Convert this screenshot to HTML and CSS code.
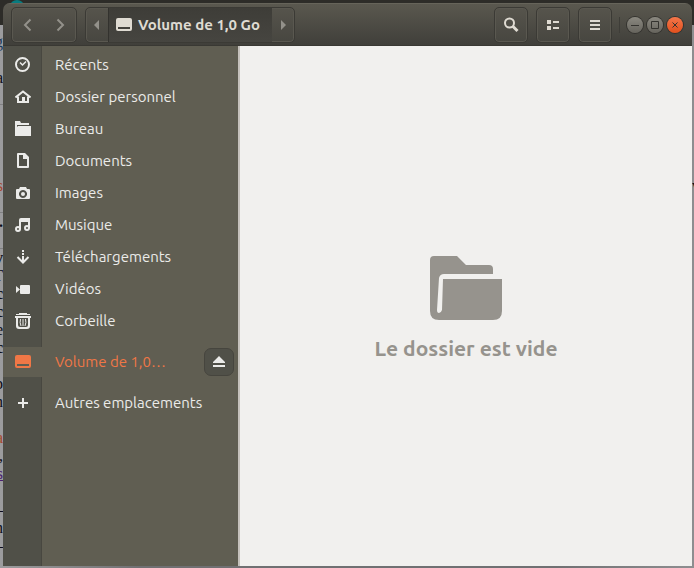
FILE: index.html
```html
<!DOCTYPE html>
<html lang="fr">
<head>
<meta charset="utf-8">
<title>Volume de 1,0 Go</title>
<link rel="stylesheet" href="styles.css">
</head>
<body>
<div class="desktop">
  <div class="backdrop" aria-hidden="true">
    <div class="backdrop-bar"><span class="backdrop-badge"></span></div>
    <div class="backdrop-page">
      <span class="scrap link">g</span>
      <span class="scrap"></span>
      <span class="scrap">a</span>
      <span class="scrap rule"></span>
      <span class="scrap"></span>
      <span class="scrap"></span>
      <span class="scrap"></span>
      <span class="scrap"></span>
      <span class="scrap-row"><span class="scrap warm">s</span><span class="scrap end">v</span></span>
      <span class="scrap rule"></span>
      <span class="scrap heavy">.</span>
      <span class="scrap rule"></span>
      <span class="scrap heavy">v</span>
      <span class="scrap">T</span>
      <span class="scrap heavy">c</span>
      <span class="scrap heavy">c</span>
      <span class="scrap">e</span>
      <span class="scrap heavy">c</span>
      <span class="scrap"></span>
      <span class="scrap">p</span>
      <span class="scrap">n</span>
      <span class="scrap"></span>
      <span class="scrap warm">a</span>
      <span class="scrap">,</span>
      <span class="scrap visited">s</span>
      <span class="scrap"></span>
      <span class="scrap">–</span>
      <span class="scrap">n</span>
      <span class="scrap">–</span>
    </div>
  </div>
  <div class="window">
    <header class="titlebar">
      <div class="group nav">
        <button aria-label="Précédent"><svg width="16" height="16" viewBox="0 0 16 16"><path d="M10.500 2.500 5 8l5.500 5.500" class="stroke"/></svg></button>
        <button aria-label="Suivant"><svg width="16" height="16" viewBox="0 0 16 16"><path d="M5.500 2.500 11 8l-5.500 5.500" class="stroke"/></svg></button>
      </div>
      <div class="group path">
        <button class="arrow" aria-label="Défiler à gauche"><svg width="6" height="10" viewBox="0 0 6 10"><path d="M5 0v10L0 5z"/></svg></button>
        <button class="current"><svg width="16" height="16" viewBox="0 0 16 16"><path fill-rule="evenodd" d="M2 1h12q2 0 2 2v9q0 2-2 2H2q-2 0-2-2V3q0-2 2-2zm0 9v2h12v-2z"/></svg><span>Volume de 1,0 Go</span></button>
        <button class="arrow" aria-label="Défiler à droite"><svg width="6" height="10" viewBox="0 0 6 10"><path d="M1 0v10l5-5z"/></svg></button>
      </div>
      <div class="actions">
        <button class="tool" aria-label="Rechercher"><svg width="16" height="16" viewBox="0 0 16 16"><circle cx="6.500" cy="6" r="4.500" class="stroke"/><path d="m9.500 9 5 5" class="stroke thick"/></svg></button>
        <button class="tool" aria-label="Affichage"><svg width="16" height="16" viewBox="0 0 16 16"><path d="M2 3h4v4H2zM8 4h6v2H8zM2 9h4v4H2zM8 10h6v2H8z"/></svg></button>
        <button class="tool" aria-label="Menu"><svg width="16" height="16" viewBox="0 0 16 16"><path d="M3 3h10v2H3zM3 7h10v2H3zM3 11h10v2H3z"/></svg></button>
      </div>
      <div class="controls">
        <button aria-label="Réduire"><svg width="16" height="16" viewBox="0 0 16 16"><path d="M4 8.500h8"/></svg></button>
        <button aria-label="Agrandir"><svg width="16" height="16" viewBox="0 0 16 16"><path d="M4.500 4.500h7v7h-7z"/></svg></button>
        <button class="close" aria-label="Fermer"><svg width="16" height="16" viewBox="0 0 16 16"><path d="m5.500 5.500 5 5m0-5-5 5"/></svg></button>
      </div>
    </header>
    <div class="content">
      <nav class="sidebar" aria-label="Emplacements">
        <a class="place" href="#"><span class="icon"><svg width="16" height="16" viewBox="0 0 16 16"><circle cx="7.500" cy="7.500" r="6.500" class="stroke"/><path d="m5 5.500 2.500 2.500 3.500-3.500" class="stroke hands"/></svg></span><span class="name">Récents</span></a>
        <a class="place" href="#"><span class="icon"><svg width="16" height="16" viewBox="0 0 16 16"><path d="M.500 8.500 8 2.500l7.500 6" class="stroke"/><path d="M2 7.500h2V12h3V8h3v4h2V7.500h2V14H2z"/></svg></span><span class="name">Dossier personnel</span></a>
        <a class="place" href="#"><span class="icon"><svg width="16" height="16" viewBox="0 0 16 16"><path d="M0 0h5l1 2h8v2H2v11H0zM3 5h13v10H2V6z"/></svg></span><span class="name">Bureau</span></a>
        <a class="place" href="#"><span class="icon"><svg width="16" height="16" viewBox="0 0 16 16"><path fill-rule="evenodd" d="M3 0h7l4 4v10q0 1-1 1H3q-1 0-1-1V1q0-1 1-1zm1 2v11h8V6H8V2z"/></svg></span><span class="name">Documents</span></a>
        <a class="place" href="#"><span class="icon"><svg width="16" height="16" viewBox="0 0 16 16"><path fill-rule="evenodd" d="M2 4h2l1-2h6l1 2h2q1 0 1 1v8q0 1-1 1H2q-1 0-1-1V5q0-1 1-1zm6 1a4 4 0 1 0 .01 0z"/><circle cx="8" cy="9" r="2"/></svg></span><span class="name">Images</span></a>
        <a class="place" href="#"><span class="icon"><svg width="16" height="16" viewBox="0 0 16 16"><path d="M4 3q0-2 2-2h9v10h-2V5H6v7H4z"/><circle cx="3" cy="12" r="2" class="stroke"/><circle cx="12" cy="11" r="2" class="stroke"/></svg></span><span class="name">Musique</span></a>
        <a class="place" href="#"><span class="icon"><svg width="16" height="16" viewBox="0 0 16 16"><path d="M7 1h2v2H7zM7 4h2v2H7zM7 7h2v6H7z"/><path d="m2.500 8 5.500 5.500L13.500 8" class="stroke"/></svg></span><span class="name">Téléchargements</span></a>
        <a class="place" href="#"><span class="icon"><svg width="16" height="16" viewBox="0 0 16 16"><path d="M1 5l4 3.500L1 12zM6 4h8q1 0 1 1v7q0 1-1 1H6q-1 0-1-1V5q0-1 1-1z"/></svg></span><span class="name">Vidéos</span></a>
        <a class="place" href="#"><span class="icon"><svg width="16" height="16" viewBox="0 0 16 16"><path d="M4 0h8v1h3v1H1V1h3z"/><path d="M0 3h16v2h-1v8q0 3-3 3H4q-3 0-3-3V5H0zm3 2v7q0 2 2 2h6q2 0 2-2V5z" fill-rule="evenodd"/><path d="M5.500 6q-1 3.500.500 7M8 6v7M10.500 6q1 3.500-.500 7" class="stroke thin"/></svg></span><span class="name">Corbeille</span></a>
        <div class="mount">
          <a class="place" href="#" aria-current="page"><span class="icon"><svg width="16" height="16" viewBox="0 0 16 16"><path fill-rule="evenodd" d="M2 1h12q2 0 2 2v9q0 2-2 2H2q-2 0-2-2V3q0-2 2-2zm0 9v2h12v-2z"/></svg></span><span class="name">Volume de 1,0…</span></a>
          <button class="eject" aria-label="Éjecter"><svg width="16" height="16" viewBox="0 0 16 16"><path d="M8 2l6 6v1H2V8zM2 11h12v2H2z"/></svg></button>
        </div>
        <a class="place" href="#"><span class="icon"><svg width="16" height="16" viewBox="0 0 16 16"><path d="M7 3h2v4h4v2H9v4H7V9H3V7h4z"/></svg></span><span class="name">Autres emplacements</span></a>
      </nav>
      <main class="empty">
        <svg width="72" height="64" viewBox="0 0 72 64"><path d="M4 0h23l9 9h23q4 0 4 4v5H14q-4 0-5 4L7 54q0 3 2 3 2 0 3-3l1-31h59v32q0 9-9 9H9q-9 0-9-9V4q0-4 4-4z"/></svg>
        <p>Le dossier est vide</p>
      </main>
    </div>
  </div>
</div>
</body>
</html>
```
FILE: styles.css
```css
* { box-sizing: border-box; }
body {
  margin: 0;
  font: 15px/20px Ubuntu, "Noto Sans", sans-serif;
}
button {
  margin: 0;
  padding: 0;
  border: 0;
  background: none;
  color: inherit;
  font: inherit;
  display: flex;
  align-items: center;
  justify-content: center;
}
svg { display: block; flex: none; fill: currentColor; }
.stroke { fill: none; stroke: currentColor; stroke-width: 2; }
.thick { stroke-width: 3; }
.thin { stroke-width: 1; }
.hands { stroke-width: 1.5; }

.desktop {
  display: grid;
  height: 100vh;
  overflow: hidden;
}
.backdrop, .window { grid-area: 1 / 1; min-height: 0; min-width: 0; }
.backdrop {
  display: flex;
  flex-direction: column;
  background: linear-gradient(to right, #9c9c9e, #707072 20%, #707072 80%, #8e8e90);
  overflow: hidden;
}
.backdrop-bar {
  flex: none;
  height: 25px;
  padding-left: 10px;
  background: #2d2c28;
}
.backdrop-badge {
  display: block;
  width: 14px;
  height: 12px;
  border-radius: 50%;
  background: #087c80;
}
.backdrop-page {
  display: flex;
  flex-direction: column;
  padding-top: 8px;
  font: 16px/18px "Liberation Serif", serif;
  color: #0c0c18;
}
.scrap {
  flex: none;
  display: flex;
  justify-content: flex-end;
  width: 3px;
  height: 18px;
  overflow: hidden;
}
.scrap-row { display: flex; justify-content: space-between; }
.end { width: 2px; justify-content: flex-start; }
.rule { border-bottom: 1px solid #808082; }
.heavy { font-weight: 700; }
.warm { color: #a8472c; }
.link { color: #1c3a5c; text-decoration: underline; }
.visited { color: #4a2170; text-decoration: underline; }

.window {
  display: flex;
  flex-direction: column;
  margin: 3px 2px 2px 3px;
  border-radius: 7px 7px 0 0;
  overflow: hidden;
  z-index: 1;
}
.titlebar {
  flex: none;
  display: flex;
  align-items: center;
  height: 43px;
  padding: 0 9px 0 8px;
  background: linear-gradient(#5a584f, #403f3a);
  border-top: 1px solid #66645a;
  border-bottom: 1px solid #393833;
  color: #dfdbd2;
}
.group, .tool {
  height: 36px;
  border: 1px solid #3b3a35;
  border-radius: 5px;
  background: linear-gradient(#56544c, #474640);
  box-shadow: inset 0 0 0 1px #5a5850;
}
.group { display: flex; }
.nav { width: 66px; margin-right: 8px; color: #93918a; }
.nav button { flex: 1; }
.path { min-width: 0; }
.arrow { width: 22px; color: #93918a; }
.current {
  gap: 6px;
  padding: 0 12px 0 7px;
  background: linear-gradient(#3e3d38, #464540);
  border-left: 1px solid #33322e;
  font-weight: 700;
  white-space: nowrap;
}
.actions { display: flex; gap: 8px; margin-left: auto; }
.tool { width: 34px; }
.controls {
  display: flex;
  align-items: center;
  gap: 4px;
  margin-left: 7px;
  padding-left: 7px;
  border-left: 1px solid #3e3d38;
}
.controls button {
  width: 16px;
  height: 16px;
  border-radius: 50%;
  background: linear-gradient(#8a8880, #66645d);
  box-shadow: 0 0 0 1px #34332f;
  color: #34332f;
}
.controls path { fill: none; stroke: currentColor; }
.controls .close { background: linear-gradient(#f4764a, #e2501d); }

.content { flex: 1; display: flex; min-height: 0; }
.sidebar {
  flex: none;
  width: 237px;
  padding-top: 3px;
  border-right: 2px solid #c5c1bc;
  background: linear-gradient(to right, #505048 38px, #484740 38px 39px, #605e52 39px);
  color: #ebebe9;
}
.place {
  display: flex;
  align-items: center;
  height: 32px;
  color: inherit;
  text-decoration: none;
}
.icon { flex: none; width: 40px; display: flex; justify-content: center; }
.name { padding-left: 12px; white-space: nowrap; }
.mount {
  display: flex;
  align-items: center;
  justify-content: space-between;
  height: 30px;
  margin: 10px 0;
  padding-right: 4px;
  background: #605e52;
}
.mount .place { color: #f07746; }
.eject {
  width: 30px;
  height: 28px;
  border: 1px solid #46453e;
  border-radius: 7px;
  background: #505048;
}
.empty {
  flex: 1;
  display: flex;
  flex-direction: column;
  align-items: center;
  justify-content: center;
  gap: 12px;
  padding-top: 8px;
  background: #f1f0ee;
  color: #96938d;
}
.empty p { margin: 0; font-size: 21px; line-height: 32px; font-weight: 700; }
```
